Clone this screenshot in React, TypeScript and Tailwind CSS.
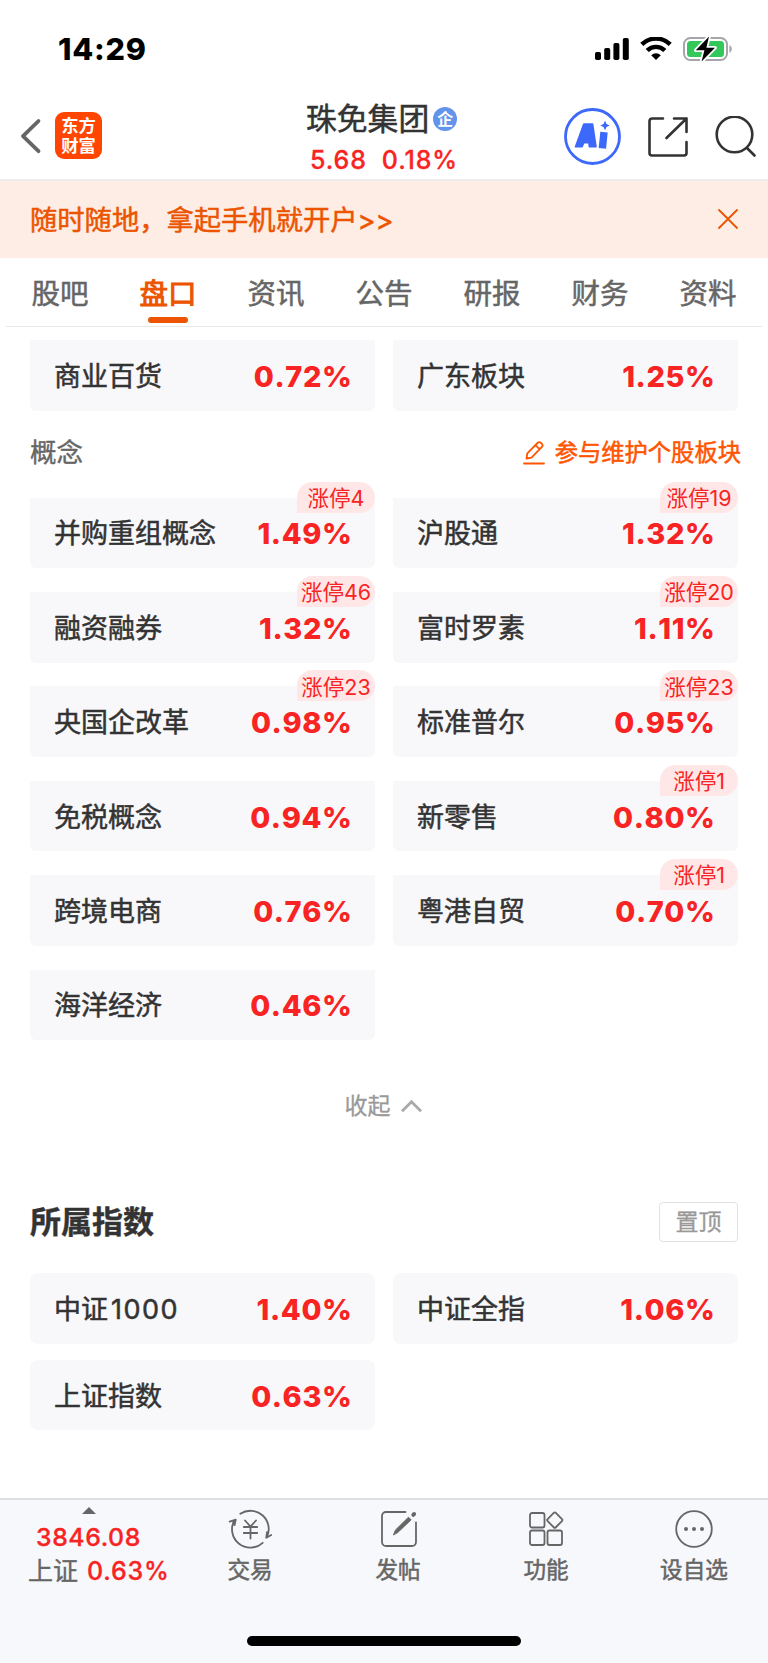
import type { ReactNode } from "react";

type Board = { name: string; code?: string; change: string; limit?: string };

const tabs = ["股吧", "盘口", "资讯", "公告", "研报", "财务", "资料"];

const industries: Board[] = [
  { name: "商业百货", change: "0.72%" },
  { name: "广东板块", change: "1.25%" },
];

const concepts: Board[] = [
  { name: "并购重组概念", change: "1.49%", limit: "涨停4" },
  { name: "沪股通", change: "1.32%", limit: "涨停19" },
  { name: "融资融券", change: "1.32%", limit: "涨停46" },
  { name: "富时罗素", change: "1.11%", limit: "涨停20" },
  { name: "央国企改革", change: "0.98%", limit: "涨停23" },
  { name: "标准普尔", change: "0.95%", limit: "涨停23" },
  { name: "免税概念", change: "0.94%" },
  { name: "新零售", change: "0.80%", limit: "涨停1" },
  { name: "跨境电商", change: "0.76%" },
  { name: "粤港自贸", change: "0.70%", limit: "涨停1" },
  { name: "海洋经济", change: "0.46%" },
];

const indexes: Board[] = [
  { name: "中证", code: "1000", change: "1.40%" },
  { name: "中证全指", change: "1.06%" },
  { name: "上证指数", change: "0.63%" },
];

function StatusBar() {
  return (
    <div className="flex h-[98px] items-start justify-between pl-[58px] pr-[35px] pt-[31px]">
      <span className="text-[30.5px] font-extrabold leading-9 tracking-[0.8px] text-black">14:29</span>
      <div className="flex items-center pt-1">
        <svg width="34" height="24" viewBox="0 0 34 24">
          <rect x="0" y="15" width="6" height="8" rx="1.8" />
          <rect x="9.2" y="11" width="6" height="12" rx="1.8" />
          <rect x="18.4" y="6" width="6" height="17" rx="1.8" />
          <rect x="27.8" y="1" width="6" height="22" rx="1.8" />
        </svg>
        <svg className="ml-[11px]" width="32" height="24" viewBox="0 0 32 24" fill="none" stroke="#000" strokeWidth="4.4">
          <path d="M1.8 7.4a20.2 20.2 0 0 1 28.4 0" />
          <path d="M7.2 13.5a12.5 12.5 0 0 1 17.6 0" />
          <path d="M11.2 18.2a7 7 0 0 1 9.6 0L16 23z" fill="#000" stroke="none" />
        </svg>
        <svg className="ml-[11px]" width="50" height="28" viewBox="0 0 50 28">
          <rect x="1" y="3" width="43" height="22" rx="6.5" fill="none" stroke="#a6a6aa" strokeWidth="2" />
          <path d="M46.4 10.2c3.2 1.2 3.2 6.4 0 7.6z" fill="#a6a6aa" />
          <rect x="4" y="6" width="37" height="16" rx="3.5" fill="#34c759" />
          <path d="M26 1.5 12.8 15.3h8.6L18.6 26.5 32 12.7h-8.6z" fill="#000" stroke="#fff" strokeWidth="3.6" strokeLinejoin="round" paintOrder="stroke" />
        </svg>
      </div>
    </div>
  );
}

function Header() {
  return (
    <header className="flex h-[83px] items-start border-b-2 border-[#ececee] pl-5">
      <svg className="mt-5 shrink-0" width="22" height="38" viewBox="0 0 22 38" fill="none" stroke="#666" strokeWidth="3.8" strokeLinecap="round" strokeLinejoin="round">
        <path d="M18.5 3 3 18.2l15.5 15" />
      </svg>
      <div className="ml-[13px] mt-3.5 flex h-[47px] w-[47px] shrink-0 items-center justify-center rounded-[9px] bg-[#ff4500] pb-0.5 font-['Noto_Sans_CJK_SC',sans-serif] text-[17.3px] font-bold leading-5 text-white">
        <span>
          东方
          <br />
          财富
        </span>
      </div>
      <div className="ml-[204px] w-[155px]">
        <div className="flex items-center">
          <h1 className="whitespace-nowrap text-[30.8px] leading-[42px] text-[#333] [-webkit-text-stroke:0.5px_#333]">珠免集团</h1>
          <span className="ml-1 flex h-6 w-6 items-center justify-center rounded-full bg-[#6493ec] text-[16px] font-bold leading-none text-white">
            企
          </span>
        </div>
        <div className="mt-1.5 flex gap-[15px] pl-1 text-[25px] font-medium leading-7 tracking-[0.9px] text-[#f82323] [-webkit-text-stroke:0.3px_#f82323]">
          <span>5.68</span>
          <span>0.18%</span>
        </div>
      </div>
      <div className="ml-[103px] mt-[9.500px] flex shrink-0">
        <svg width="57" height="57" viewBox="0 0 57 57">
          <circle cx="28.5" cy="28.5" r="27" fill="none" stroke="#3c68fb" strokeWidth="2.8" />
          <path fill="#3c68fb" fillRule="evenodd" stroke="#3c68fb" strokeWidth="1.6" strokeLinejoin="round" d="M19.8 16h8.8l3.4 22.8h-6.600l-.5-4.2h-5.200l-1.600 4.2h-6.600zM24.600 24.500l-1.800 4.500h2.300z" />
          <path d="m40 24.2-1.600 16.200" stroke="#3c68fb" strokeWidth="7.400" fill="none" />
          <path fill="#3c68fb" d="m41 12.800 1.500 3.200 3.200 1.500-3.200 1.500-1.500 3.200-1.500-3.200-3.200-1.500 3.200-1.500z" />
        </svg>
        <svg className="ml-[26.500px] mt-[9px]" width="42" height="42" viewBox="0 0 42 42" fill="none" stroke="#333" strokeWidth="2.6" strokeLinecap="round" strokeLinejoin="round">
          <path d="M15 1.500H4a2.500 2.500 0 0 0-2.500 2.500v32A2.500 2.500 0 0 0 4 38.500h32a2.500 2.500 0 0 0 2.500-2.500V25M26 1.500h12.500V15M38.500 1.500 18.500 21" />
        </svg>
        <svg className="ml-[25px] mt-2" width="44" height="44" viewBox="0 0 44 44" fill="none" stroke="#333" strokeWidth="2.6" strokeLinecap="round">
          <circle cx="19.5" cy="18.500" r="17.8" />
          <path d="M32 32 39.5 39.5" />
        </svg>
      </div>
    </header>
  );
}

function Tabs() {
  return (
    <nav className="mx-1.5 flex h-[69px] border-b border-[#e9e9e9]">
      {tabs.map((tab) => (
        <div key={tab} className="flex w-[108px] shrink-0 flex-col items-center">
          {tab === "盘口" ? (
            <>
              <span className="mt-[15px] text-[28.5px] leading-[42px] text-[#ec5400] [-webkit-text-stroke:1px_#ec5400]">{tab}</span>
              <span className="mt-0.5 h-1.5 w-10 rounded-full bg-[#ec5400]" />
            </>
          ) : (
            <span className="mt-[15px] text-[28.5px] leading-[42px] text-[#666] [-webkit-text-stroke:0.5px_#666]">{tab}</span>
          )}
        </div>
      ))}
    </nav>
  );
}

function BoardCard({ board, shape }: { board: Board; shape: string }) {
  return (
    <div className={`relative flex h-[70.6px] items-center justify-between bg-[#f8f8fb] pl-6 pr-[22.5px] pt-[3px] ${shape}`}>
      <span className="text-[27px] leading-10 text-[#333] [-webkit-text-stroke:0.5px_#333]">
        {board.name}
        {board.code && <span className="ml-[3px] tracking-[1.5px]">{board.code}</span>}
      </span>
      <span className="text-[29px] font-extrabold leading-10 tracking-[0.6px] text-[#f82323] [font-kerning:none]">{board.change}</span>
      {board.limit && (
        <span className="absolute right-0 -top-4 flex h-[31px] w-[78px] items-center justify-center whitespace-nowrap rounded-2xl rounded-bl-none bg-[#ffe7e7] pt-[3px] text-[21.5px] leading-none text-[#f82323]">
          {board.limit}
        </span>
      )}
    </div>
  );
}

function NavItem({ label, children }: { label: string; children: ReactNode }) {
  return (
    <div className="flex w-[148px] flex-col items-center">
      <svg width="44" height="40" viewBox="0 0 44 40" fill="none" stroke="#666" strokeWidth="1.8" strokeLinecap="round" strokeLinejoin="round">
        {children}
      </svg>
      <span className="mt-[5px] text-[22.6px] leading-8 text-[#666] [-webkit-text-stroke:0.5px_#666]">{label}</span>
    </div>
  );
}

function BottomBar() {
  return (
    <footer className="h-[165px] border-t-2 border-[#dfe0e3] bg-[#f7f8fb]">
      <div className="flex h-[136px] items-start">
        <div className="w-44 pl-7">
          <svg className="ml-[54px] mt-[7px]" width="14" height="7" viewBox="0 0 14 7">
            <path d="M7 0l7 7H0z" fill="#666" />
          </svg>
          <div className="ml-2 mt-[7px] text-[24.8px] font-medium leading-8 tracking-[0.6px] text-[#f82323] [-webkit-text-stroke:0.3px_#f82323]">3846.08</div>
          <div className="mt-0.5 whitespace-nowrap leading-8">
            <span className="text-[25px] text-[#666] [-webkit-text-stroke:0.4px_#666]">上证</span>
            <span className="ml-[9px] text-[25px] font-medium tracking-[0.8px] text-[#f82323] [-webkit-text-stroke:0.3px_#f82323]">0.63%</span>
          </div>
        </div>
        <div className="flex pt-[9px]">
          <NavItem label="交易">
            <path d="M12.3 4.8A18.3 18.3 0 0 1 38.9 28M34.7 33.8A18.3 18.3 0 0 1 6.3 11.5M1.7 12.7l6-2-1.2 5.5M43.3 26l-5 2.7.7-5.5" />
            <path d="m17 11.5 5.5 6 5.5-6M15.8 18h13.4M15.8 24h13.4M22.5 17.5v12" />
          </NavItem>
          <NavItem label="发帖">
            <path d="M29.5 3H10a4 4 0 0 0-4 4v26a4 4 0 0 0 4 4h26a4 4 0 0 0 4-4V13.5" />
            <path d="M17.6 25.6 19.5 21 32.5 8.2l2.6 2.6L22 23.3z" fill="#666" stroke="#666" strokeWidth="1" />
            <path d="m37.3 5.8.8-.8" strokeWidth="4" />
          </NavItem>
          <NavItem label="功能">
            <rect x="6" y="4" width="14.5" height="14.5" rx="2" />
            <rect x="6" y="21.5" width="14.5" height="14.5" rx="2" />
            <rect x="23.5" y="21.5" width="14.5" height="14.5" rx="2" />
            <rect x="25" y="5.3" width="11.6" height="11.6" rx="1.5" transform="rotate(45 30.8 11.1)" />
          </NavItem>
          <NavItem label="设自选">
            <circle cx="22" cy="20" r="17.8" />
            <path d="M14 20h.01M22 20h.01M30 20h.01" strokeWidth="4" />
          </NavItem>
        </div>
      </div>
      <div className="mx-auto h-2.5 w-[274px] rounded-full bg-black" />
    </footer>
  );
}

export default function App() {
  return (
    <div className="flex h-[1663px] w-[768px] flex-col overflow-hidden bg-white font-['Inter','Noto_Sans_CJK_SC',sans-serif]">
      <StatusBar />
      <Header />
      <div className="flex h-[77px] items-center justify-between bg-[#fdede4] px-[30px] text-[#ec5400]">
        <span className="pt-0.5 text-[27.3px] leading-10 [-webkit-text-stroke:0.5px_#ec5400]">随时随地，拿起手机就开户&gt;&gt;</span>
        <svg className="-mt-0.5" width="20" height="20" viewBox="0 0 20 20" fill="none" stroke="#ec5400" strokeWidth="1.8" strokeLinecap="round">
          <path d="m1 1 18 18M19 1 1 19" />
        </svg>
      </div>
      <Tabs />

      <main className="flex-1 px-[30px] pt-[13px]">
        <div className="grid grid-cols-2 gap-x-[18px]">
          {industries.map((board) => (
            <BoardCard key={board.name} board={board} shape="rounded-b-md" />
          ))}
        </div>

        <div className="mt-[22px] flex h-10 items-center justify-between pt-px">
          <span className="text-[26.5px] text-[#666] [-webkit-text-stroke:0.4px_#666]">概念</span>
          <div className="-mr-[3px] flex items-center text-[#ff5500]">
            <svg width="22" height="24" viewBox="0 0 22 24" fill="none" stroke="#ff5500" strokeWidth="1.8" strokeLinecap="round" strokeLinejoin="round">
              <path d="M1 22.5h20M3.5 17.5l.8-5.2L14.5 2a2.5 2.5 0 0 1 3.5 0l.7.7a2.5 2.5 0 0 1 0 3.5L8.5 16.7zM12.5 4.2l4 4" />
            </svg>
            <span className="ml-2.5 text-[23.3px] [-webkit-text-stroke:0.5px_#ff5500]">参与维护个股板块</span>
          </div>
        </div>

        <div className="mt-[25px] grid grid-cols-2 gap-x-[18px] gap-y-[23.8px]">
          {concepts.map((board) => (
            <BoardCard key={board.name} board={board} shape="rounded-b-md" />
          ))}
        </div>

        <div className="mt-[46px] flex h-10 items-center justify-center pr-0.5 text-[#999]">
          <span className="text-[23px] [-webkit-text-stroke:0.3px_#999]">收起</span>
          <svg className="ml-2.5" width="21" height="14" viewBox="0 0 22 14" fill="none" stroke="#aaa" strokeWidth="3">
            <path d="m1 12.5 10-10 10 10" />
          </svg>
        </div>

        <div className="mt-[76px] flex h-10 items-center justify-between">
          <h2 className="text-[31px] font-bold text-[#333] [-webkit-text-stroke:0.4px_#333]">所属指数</h2>
          <button className="h-10 w-[79px] rounded border border-[#dfe2e6] text-[23px] leading-none text-[#999] [-webkit-text-stroke:0.3px_#999]">置顶</button>
        </div>

        <div className="mt-[31px] grid grid-cols-2 gap-x-[18px] gap-y-4">
          {indexes.map((board) => (
            <BoardCard key={board.name} board={board} shape="rounded-lg" />
          ))}
        </div>
      </main>
      <BottomBar />
    </div>
  );
}
